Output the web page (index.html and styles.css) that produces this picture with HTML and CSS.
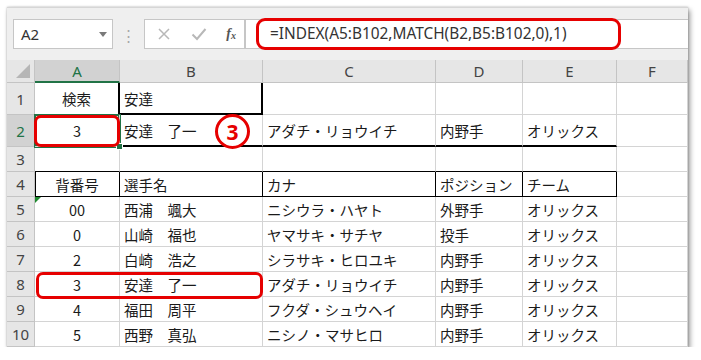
FILE: index.html
```html
<!DOCTYPE html>
<html>
<head>
    <title>INDEX / MATCH</title>
    <link rel="stylesheet" href="styles.css">
</head>
<body>
    <div class="window">
        <div class="formula-bar">
            <div class="name-box">
                <span>A2</span>
                <svg class="caret" width="8" height="5" viewBox="0 0 8 5"><polygon points="0,0 8,0 4,5" fill="#7a7a7a"/></svg>
            </div>
            <div class="grip">⋮</div>
            <div class="fx-buttons">
                <svg width="14" height="14" viewBox="0 0 14 14"><path d="M2 2 L12 12 M12 2 L2 12" stroke="#b8b8b8" stroke-width="1.5" fill="none"/></svg>
                <svg width="16" height="14" viewBox="0 0 16 14"><path d="M1.5 7.5 L6 12 L14.5 2" stroke="#b8b8b8" stroke-width="2" fill="none"/></svg>
                <span class="fx">f<sub>x</sub></span>
            </div>
            <div class="formula-input">=INDEX(A5:B102,MATCH(B2,B5:B102,0),1)</div>
            <div class="mark mark-formula"></div>
        </div>

        <div class="sheet">
            <div class="hd corner"><svg width="14" height="14" viewBox="0 0 14 14"><polygon points="14,0 14,14 0,14" fill="#b6b6b6"/></svg></div>
            <div class="hd col sel">A</div>
            <div class="hd col">B</div>
            <div class="hd col">C</div>
            <div class="hd col">D</div>
            <div class="hd col">E</div>
            <div class="hd col">F</div>

            <div class="hd row">1</div>
            <div class="c mid rb2">検索</div>
            <div class="c rb2 bb2">安達</div>
            <div class="c"></div><div class="c"></div><div class="c"></div><div class="c"></div>

            <div class="hd row sel">2</div>
            <div class="c mid active">3</div>
            <div class="c bb2">安達　了一</div>
            <div class="c bb2">アダチ・リョウイチ</div>
            <div class="c bb2">内野手</div>
            <div class="c bb2">オリックス</div>
            <div class="c"></div>

            <div class="hd row">3</div>
            <div class="c bb1"></div><div class="c bb1"></div><div class="c bb1"></div><div class="c bb1"></div><div class="c bb1"></div><div class="c"></div>

            <div class="hd row">4</div>
            <div class="c mid box lb1">背番号</div>
            <div class="c box">選手名</div>
            <div class="c box">カナ</div>
            <div class="c box">ポジション</div>
            <div class="c box">チーム</div>
            <div class="c"></div>

            <div class="hd row">5</div>
            <div class="c mid warn">00</div>
            <div class="c">西浦　颯大</div>
            <div class="c">ニシウラ・ハヤト</div>
            <div class="c">外野手</div>
            <div class="c">オリックス</div>
            <div class="c"></div>

            <div class="hd row">6</div>
            <div class="c mid">0</div>
            <div class="c">山崎　福也</div>
            <div class="c">ヤマサキ・サチヤ</div>
            <div class="c">投手</div>
            <div class="c">オリックス</div>
            <div class="c"></div>

            <div class="hd row">7</div>
            <div class="c mid">2</div>
            <div class="c">白崎　浩之</div>
            <div class="c">シラサキ・ヒロユキ</div>
            <div class="c">内野手</div>
            <div class="c">オリックス</div>
            <div class="c"></div>

            <div class="hd row">8</div>
            <div class="c mid">3</div>
            <div class="c">安達　了一</div>
            <div class="c">アダチ・リョウイチ</div>
            <div class="c">内野手</div>
            <div class="c">オリックス</div>
            <div class="c"></div>

            <div class="hd row">9</div>
            <div class="c mid">4</div>
            <div class="c">福田　周平</div>
            <div class="c">フクダ・シュウヘイ</div>
            <div class="c">内野手</div>
            <div class="c">オリックス</div>
            <div class="c"></div>

            <div class="hd row">10</div>
            <div class="c mid">5</div>
            <div class="c">西野　真弘</div>
            <div class="c">ニシノ・マサヒロ</div>
            <div class="c">内野手</div>
            <div class="c">オリックス</div>
            <div class="c"></div>

            <!-- annotations -->
            <div class="mark mark-a2"></div>
            <div class="mark mark-row8"></div>
            <div class="badge">3</div>
        </div>
    </div>
</body>
</html>
```

FILE: styles.css
```css
body {
    margin: 0;
    background: #fff;
    font-family: "Noto Sans CJK JP", "Noto Sans", sans-serif;
}

.window {
    position: relative;
    margin: 7px 0 0 7px;
    width: 681px;
    height: 340px;
    background: #efefef;
    box-shadow: 2px 3px 5px rgba(0, 0, 0, 0.4), 0 0 2px rgba(0, 0, 0, 0.25);
}

/* formula bar */
.formula-bar {
    position: relative;
    display: flex;
    align-items: center;
    height: 53px;
    padding: 0 0 0 6px;
    box-sizing: border-box;
    border-top: 1px solid #d6d6d6;
}

.name-box {
    display: flex;
    align-items: center;
    justify-content: space-between;
    width: 100px;
    height: 30px;
    box-sizing: border-box;
    padding: 0 5px 0 7px;
    background: #fff;
    border: 1px solid #c6c6c6;
    font-family: "Noto Sans", sans-serif;
    font-size: 15px;
    color: #333;
}

.grip {
    width: 31px;
    text-align: center;
    color: #a8a8a8;
    font-size: 15px;
}

.fx-buttons {
    display: flex;
    align-items: center;
    justify-content: space-between;
    width: 101px;
    height: 30px;
    box-sizing: border-box;
    padding: 0 8px 0 12px;
    background: #fff;
    border: 1px solid #c6c6c6;
}

.fx {
    font-family: "Liberation Serif", serif;
    font-style: italic;
    font-weight: bold;
    font-size: 14px;
    color: #555;
}

.fx sub {
    font-size: 10px;
    vertical-align: -1px;
}

.formula-input {
    flex: 1;
    height: 30px;
    box-sizing: border-box;
    padding-left: 24px;
    line-height: 28px;
    background: #fff;
    border: 1px solid #c6c6c6;
    border-right: none;
    font-family: "Noto Sans", sans-serif;
    font-size: 15.4px;
    color: #333;
}

/* sheet */
.sheet {
    position: relative;
    display: grid;
    grid-template-columns: 28px 85px 143px 173px 87px 94px 71px;
    grid-template-rows: 23px 32px 32px repeat(8, 25px);
    background: #fff;
}

.hd {
    display: flex;
    align-items: center;
    justify-content: center;
    box-sizing: border-box;
    background: #e6e6e6;
    color: #444;
    font-family: "Noto Sans", sans-serif;
    font-size: 15px;
    border-right: 1px solid #c4c4c4;
    border-bottom: 1px solid #c4c4c4;
}

.hd.corner {
    align-items: flex-end;
    justify-content: flex-end;
    padding: 0 4px 4px 0;
}

.hd.sel {
    background: #d2d2d2;
    color: #217346;
}

.hd.col.sel {
    border-bottom: 2px solid #217346;
}

.c {
    display: flex;
    align-items: center;
    box-sizing: border-box;
    padding-left: 4px;
    border-right: 1px solid #d4d4d4;
    border-bottom: 1px solid #d4d4d4;
    font-size: 14.5px;
    color: #1a1a1a;
    white-space: nowrap;
    position: relative;
}

.c.mid {
    justify-content: center;
    padding-left: 0;
}

.rb2 {
    border-right: 2px solid #000;
}

.bb2 {
    border-bottom: 2px solid #000;
}

.bb1 {
    border-bottom: 1px solid #000;
}

.box {
    border-right: 1px solid #000;
    border-bottom: 1px solid #000;
}

.lb1 {
    box-shadow: inset 1px 0 0 #000;
}

.active {
    box-shadow: 0 0 0 1px #217346, inset 0 0 0 1px #217346;
    z-index: 1;
}

.active::after {
    content: "";
    position: absolute;
    right: -4px;
    bottom: -4px;
    width: 5px;
    height: 5px;
    background: #217346;
    border: 1px solid #fff;
}

.warn::before {
    content: "";
    position: absolute;
    left: 0;
    top: 0;
    border-top: 6px solid #1e8a2e;
    border-right: 6px solid transparent;
}

/* red annotations */
.mark {
    position: absolute;
    box-sizing: border-box;
    border: 3px solid #e60000;
    border-radius: 7px;
    z-index: 2;
}

.mark-formula {
    left: 249px;
    top: 10px;
    width: 365px;
    height: 32px;
    border-radius: 9px;
}

.mark-a2 {
    left: 27px;
    top: 55px;
    width: 86px;
    height: 32px;
}

.mark-row8 {
    left: 29px;
    top: 212px;
    width: 227px;
    height: 27px;
}

.badge {
    position: absolute;
    left: 208px;
    top: 54px;
    width: 35px;
    height: 35px;
    box-sizing: border-box;
    border: 3px solid #e60000;
    border-radius: 50%;
    background: #fff;
    display: flex;
    align-items: center;
    justify-content: center;
    color: #e60000;
    font-family: "Noto Sans", sans-serif;
    font-weight: bold;
    font-size: 21px;
    z-index: 2;
}
```
